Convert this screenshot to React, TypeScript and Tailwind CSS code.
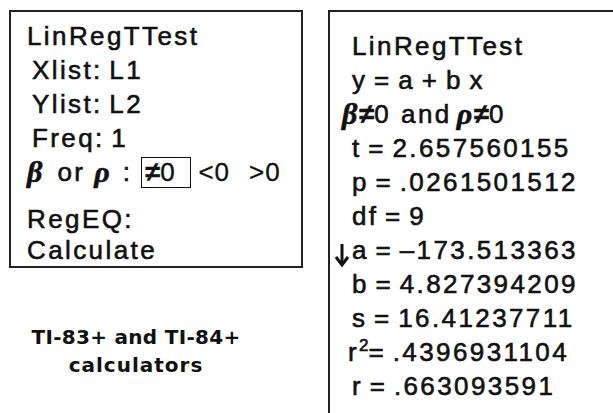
export default function App() {
  const line = "h-[34px] leading-[34px] whitespace-nowrap";
  const greek = "font-['Liberation_Serif',serif] font-bold italic text-[30px] tracking-[0px]";
  return (
    <div className="flex w-[613px] h-[413px] overflow-hidden bg-white text-[#111] font-['Liberation_Sans',Arial,sans-serif] text-[26px] tracking-[2.4px] [word-spacing:-3px] [-webkit-text-stroke:0.6px_#111]">
      {/* left: input screen + caption */}
      <div className="ml-[9px] mt-[10px] w-[294px] flex flex-col shrink-0">
        <div className="h-[258px] border-2 border-[#222] pl-[16px] pt-[7px]">
          <div className={line}>LinRegTTest</div>
          <div className={`${line} pl-[5px]`}>Xlist: L1</div>
          <div className={`${line} pl-[5px]`}>Ylist: L2</div>
          <div className={`${line} pl-[5px]`}>Freq: 1</div>
          <div className={`${line} flex items-center`}>
            <span className={greek}>β</span>
            <span className="ml-[15px]">or</span>
            <span className={`ml-[9px] ${greek}`}>ρ</span>
            <span className="ml-[13px]">:</span>
            <span className="ml-[9px] w-[50px] h-[31px] leading-[29px] border-[1.5px] border-[#111] pl-[3px] tracking-[0px] [-webkit-text-stroke:0.4px_#111]">
              <span className="font-bold text-[27px]">≠</span>0
            </span>
            <span className="ml-[7px] tracking-[1px] [-webkit-text-stroke:0.3px_#111]">&lt;0</span>
            <span className="ml-[19px] tracking-[1px] [-webkit-text-stroke:0.3px_#111]">&gt;0</span>
          </div>
          <div className={`${line} mt-[13px]`}>RegEQ:</div>
          <div className={`${line} -mt-[3px]`}>Calculate</div>
        </div>
        <div className="mt-[55px] pr-[40px] text-center font-['DejaVu_Sans',sans-serif] font-bold text-[20px] leading-[28px] tracking-[0.3px] [word-spacing:0px] [-webkit-text-stroke:0px]">
          <div>TI-83+ and TI-84+</div>
          <div className="tracking-[1px]">calculators</div>
        </div>
      </div>

      {/* right: results screen */}
      <div className="ml-[25px] mt-[10px] flex-1 h-[500px] border-l-2 border-t-2 border-[#222] pl-[22px] pt-[17px]">
        <div className={line}>LinRegTTest</div>
        <div className={line}>y = a + b x</div>
        <div className={`${line} -ml-[10px] flex items-center`}>
          <span className={greek}>β</span>
          <span className="ml-[2px] font-bold text-[27px] tracking-[0px]">≠</span>
          <span>0</span>
          <span className="ml-[10px]">and</span>
          <span className={`ml-[5px] ${greek}`}>ρ</span>
          <span className="ml-[2px] font-bold text-[27px] tracking-[0px]">≠</span>
          <span>0</span>
        </div>
        <div className={line}>t = 2.657560155</div>
        <div className={line}>p = .0261501512</div>
        <div className={line}>df = 9</div>
        <div className={`${line} -ml-[18px] flex items-center`}>
          <svg width="16" height="26" viewBox="0 0 16 26" className="mt-[10px] mr-[2px]">
            <path d="M8 2 V22" stroke="#111" strokeWidth="3" fill="none" />
            <path d="M2 15 L8 23 L14 15" stroke="#111" strokeWidth="3" fill="none" />
          </svg>
          <span>a = –173.513363</span>
        </div>
        <div className={line}>b = 4.827394209</div>
        <div className={line}>s = 16.41237711</div>
        <div className={`${line} -ml-[4px]`}>
          r<sup className="text-[17px] tracking-[0px] -top-[10px] relative align-baseline">2</sup>= .4396931104
        </div>
        <div className={line}>r = .663093591</div>
      </div>
    </div>
  );
}
